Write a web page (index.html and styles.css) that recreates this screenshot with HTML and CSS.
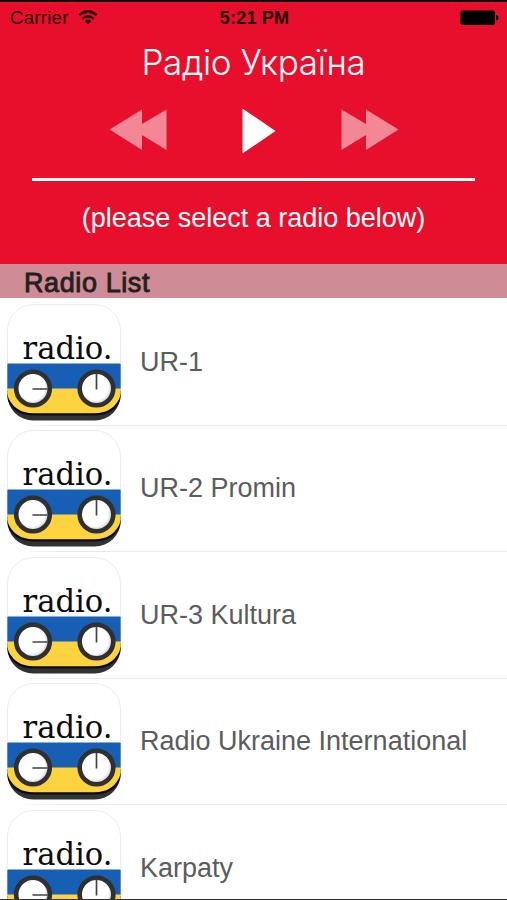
FILE: index.html
```html
<!DOCTYPE html>
<html lang="uk">
<head>
    <meta charset="UTF-8">
    <meta name="viewport" content="width=device-width, initial-scale=1.0">
    <title>Радіо Україна</title>
    <link rel="stylesheet" href="styles.css">
</head>
<body>

    <svg class="defs" width="0" height="0">
        <defs>
            <clipPath id="iconShape">
                <rect x="0.3" y="0.5" width="113.4" height="116" rx="26"/>
            </clipPath>
            <radialGradient id="knobFace" cx="0.46" cy="0.46" r="0.54">
                <stop offset="0.72" stop-color="#fff"/>
                <stop offset="1" stop-color="#bbb"/>
            </radialGradient>
            <symbol id="radioIcon" viewBox="0 0 114 117">
                <g clip-path="url(#iconShape)">
                    <rect width="114" height="60" fill="#fff"/>
                    <rect y="90" width="114" height="27" fill="#303233"/>
                    <path d="M0 86V94Q5 111.500 28 111.500H86Q109 111.500 114 94V86Z" fill="#0b0b0b"/>
                    <rect y="59.5" width="114" height="25.5" fill="#175eb5"/>
                    <path d="M0 84.5H114V90Q108 109.3 87 109.3H27Q6 109.3 0 90Z" fill="#fed340"/>
                </g>
                <path d="M0.5 59.5V26.5a26 26 0 0 1 26-26h61a26 26 0 0 1 26 26V59.5" fill="none" stroke="#ebebec"/>
                <text class="icon-text" x="15.5" y="55.3" textLength="90" lengthAdjust="spacingAndGlyphs">radio.</text>
                <circle cx="26" cy="84.5" r="16.8" fill="url(#knobFace)" stroke="#303030" stroke-width="4.6"/>
                <circle cx="89.5" cy="84.5" r="16.8" fill="url(#knobFace)" stroke="#303030" stroke-width="4.6"/>
                <path d="M25.5 85H40.500M89.500 69.500V85.500" stroke="#444" stroke-width="1.700"/>
            </symbol>
        </defs>
    </svg>

    <header class="player">
        <div class="status-bar">
            <div class="carrier">
                <span>Carrier</span>
                <svg width="20" height="16" viewBox="0 0 20 16" fill="none" stroke="#1c0306" stroke-width="2.4">
                    <path d="M1.300 5.200Q10 -2.600 18.700 5.200"/>
                    <path d="M4.500 8.700Q10 3.800 15.500 8.700"/>
                    <path d="M6.800 10.900Q10 8.300 13.200 10.900L10 14.300Z" fill="#1c0306" stroke="none"/>
                </svg>
            </div>
            <div class="time">5:21 PM</div>
            <svg class="battery" width="39" height="16" viewBox="0 0 39 16">
                <rect x="0.500" y="0.500" width="34.500" height="14.500" rx="2" fill="#000"/>
                <path d="M36 5Q38.600 5.500 38.600 7.800T36 10.500Z" fill="#000"/>
            </svg>
        </div>

        <h1>Радіо Україна</h1>

        <div class="controls">
            <svg width="58" height="42" viewBox="0 0 58 42">
                <path class="dim" d="M0.500 20.500L33 0.500V15L57.500 0.500V41L33 26V41Z"/>
            </svg>
            <svg class="play" width="34" height="46" viewBox="0 0 34 46">
                <path d="M0.500 0.500L33.500 23L0.500 45.500Z" fill="#fff"/>
            </svg>
            <svg width="58" height="42" viewBox="0 0 58 42">
                <path class="dim" d="M57.500 20.500L25 0.500V15L0.500 0.500V41L25 26V41Z"/>
            </svg>
        </div>

        <div class="progress"></div>
        <p class="now-playing">(please select a radio below)</p>
    </header>

    <h2>Radio List</h2>

    <ul class="radio-list">
        <li><svg class="icon"><use href="#radioIcon"/></svg><span>UR-1</span></li>
        <li><svg class="icon"><use href="#radioIcon"/></svg><span>UR-2 Promin</span></li>
        <li><svg class="icon"><use href="#radioIcon"/></svg><span>UR-3 Kultura</span></li>
        <li><svg class="icon"><use href="#radioIcon"/></svg><span>Radio Ukraine International</span></li>
        <li><svg class="icon"><use href="#radioIcon"/></svg><span>Karpaty</span></li>
    </ul>

</body>
</html>
```
FILE: styles.css
```css
body {
    font-family: 'Liberation Sans', Arial, sans-serif;
    margin: 0;
    height: 900px;
    box-sizing: border-box;
    border-top: 2px solid #170004;
    border-bottom: 1px solid #333;
    display: flex;
    flex-direction: column;
    overflow: hidden;
    background: white;
}

.defs {
    position: absolute;
}

.player {
    height: 262px;
    flex: none;
    background-color: #e80f2d;
    color: white;
    display: flex;
    flex-direction: column;
    align-items: center;
}

.status-bar {
    width: 100%;
    height: 32px;
    box-sizing: border-box;
    padding: 0 8px 0 10px;
    display: grid;
    grid-template-columns: 1fr auto 1fr;
    align-items: center;
    color: #1c0306;
    font-size: 18.5px;
}

.carrier {
    display: flex;
    align-items: center;
    gap: 9px;
    letter-spacing: 0.3px;
}

.time {
    font-weight: bold;
    font-size: 18px;
    letter-spacing: 0.2px;
}

.battery {
    justify-self: end;
}

h1 {
    margin: 5px 0 0;
    font-family: Inter, 'Liberation Sans', sans-serif;
    font-weight: 300;
    font-size: 35px;
    line-height: 46px;
    letter-spacing: -0.4px;
    white-space: nowrap;
}

.controls {
    width: 290px;
    height: 46px;
    margin-top: 22px;
    display: flex;
    justify-content: space-between;
    align-items: center;
}

.play {
    margin: 2px 0 0 10px;
}

.dim {
    fill: #f38795;
}

.progress {
    width: 443px;
    height: 3px;
    margin-top: 25px;
    background-color: white;
}

.now-playing {
    margin: 21px 0 0;
    font-size: 27px;
    line-height: 32px;
    white-space: nowrap;
}

h2 {
    flex: none;
    height: 34px;
    margin: 0;
    padding-left: 24px;
    background-color: #cf8b96;
    color: #24201f;
    font-weight: normal;
    font-size: 27px;
    line-height: 38px;
    letter-spacing: 0.6px;
    -webkit-text-stroke: 0.9px #24201f;
}

.radio-list {
    list-style: none;
    margin: 1.5px 0 0;
    padding: 0;
}

.radio-list li {
    height: 126.4px;
    display: flex;
    align-items: flex-start;
    gap: 19px;
    padding: 4.5px 0 0 7px;
    box-sizing: border-box;
    color: #5c5c5c;
    font-size: 27px;
    line-height: 116px;
    background: linear-gradient(to right, transparent 20px, #e9e9ea 60px) bottom / 100% 1px no-repeat;
}

.icon {
    flex: none;
    width: 114px;
    height: 117px;
}

.icon-text {
    font-family: 'DejaVu Serif', serif;
    font-size: 31px;
    fill: #0c0c0c;
}
```
